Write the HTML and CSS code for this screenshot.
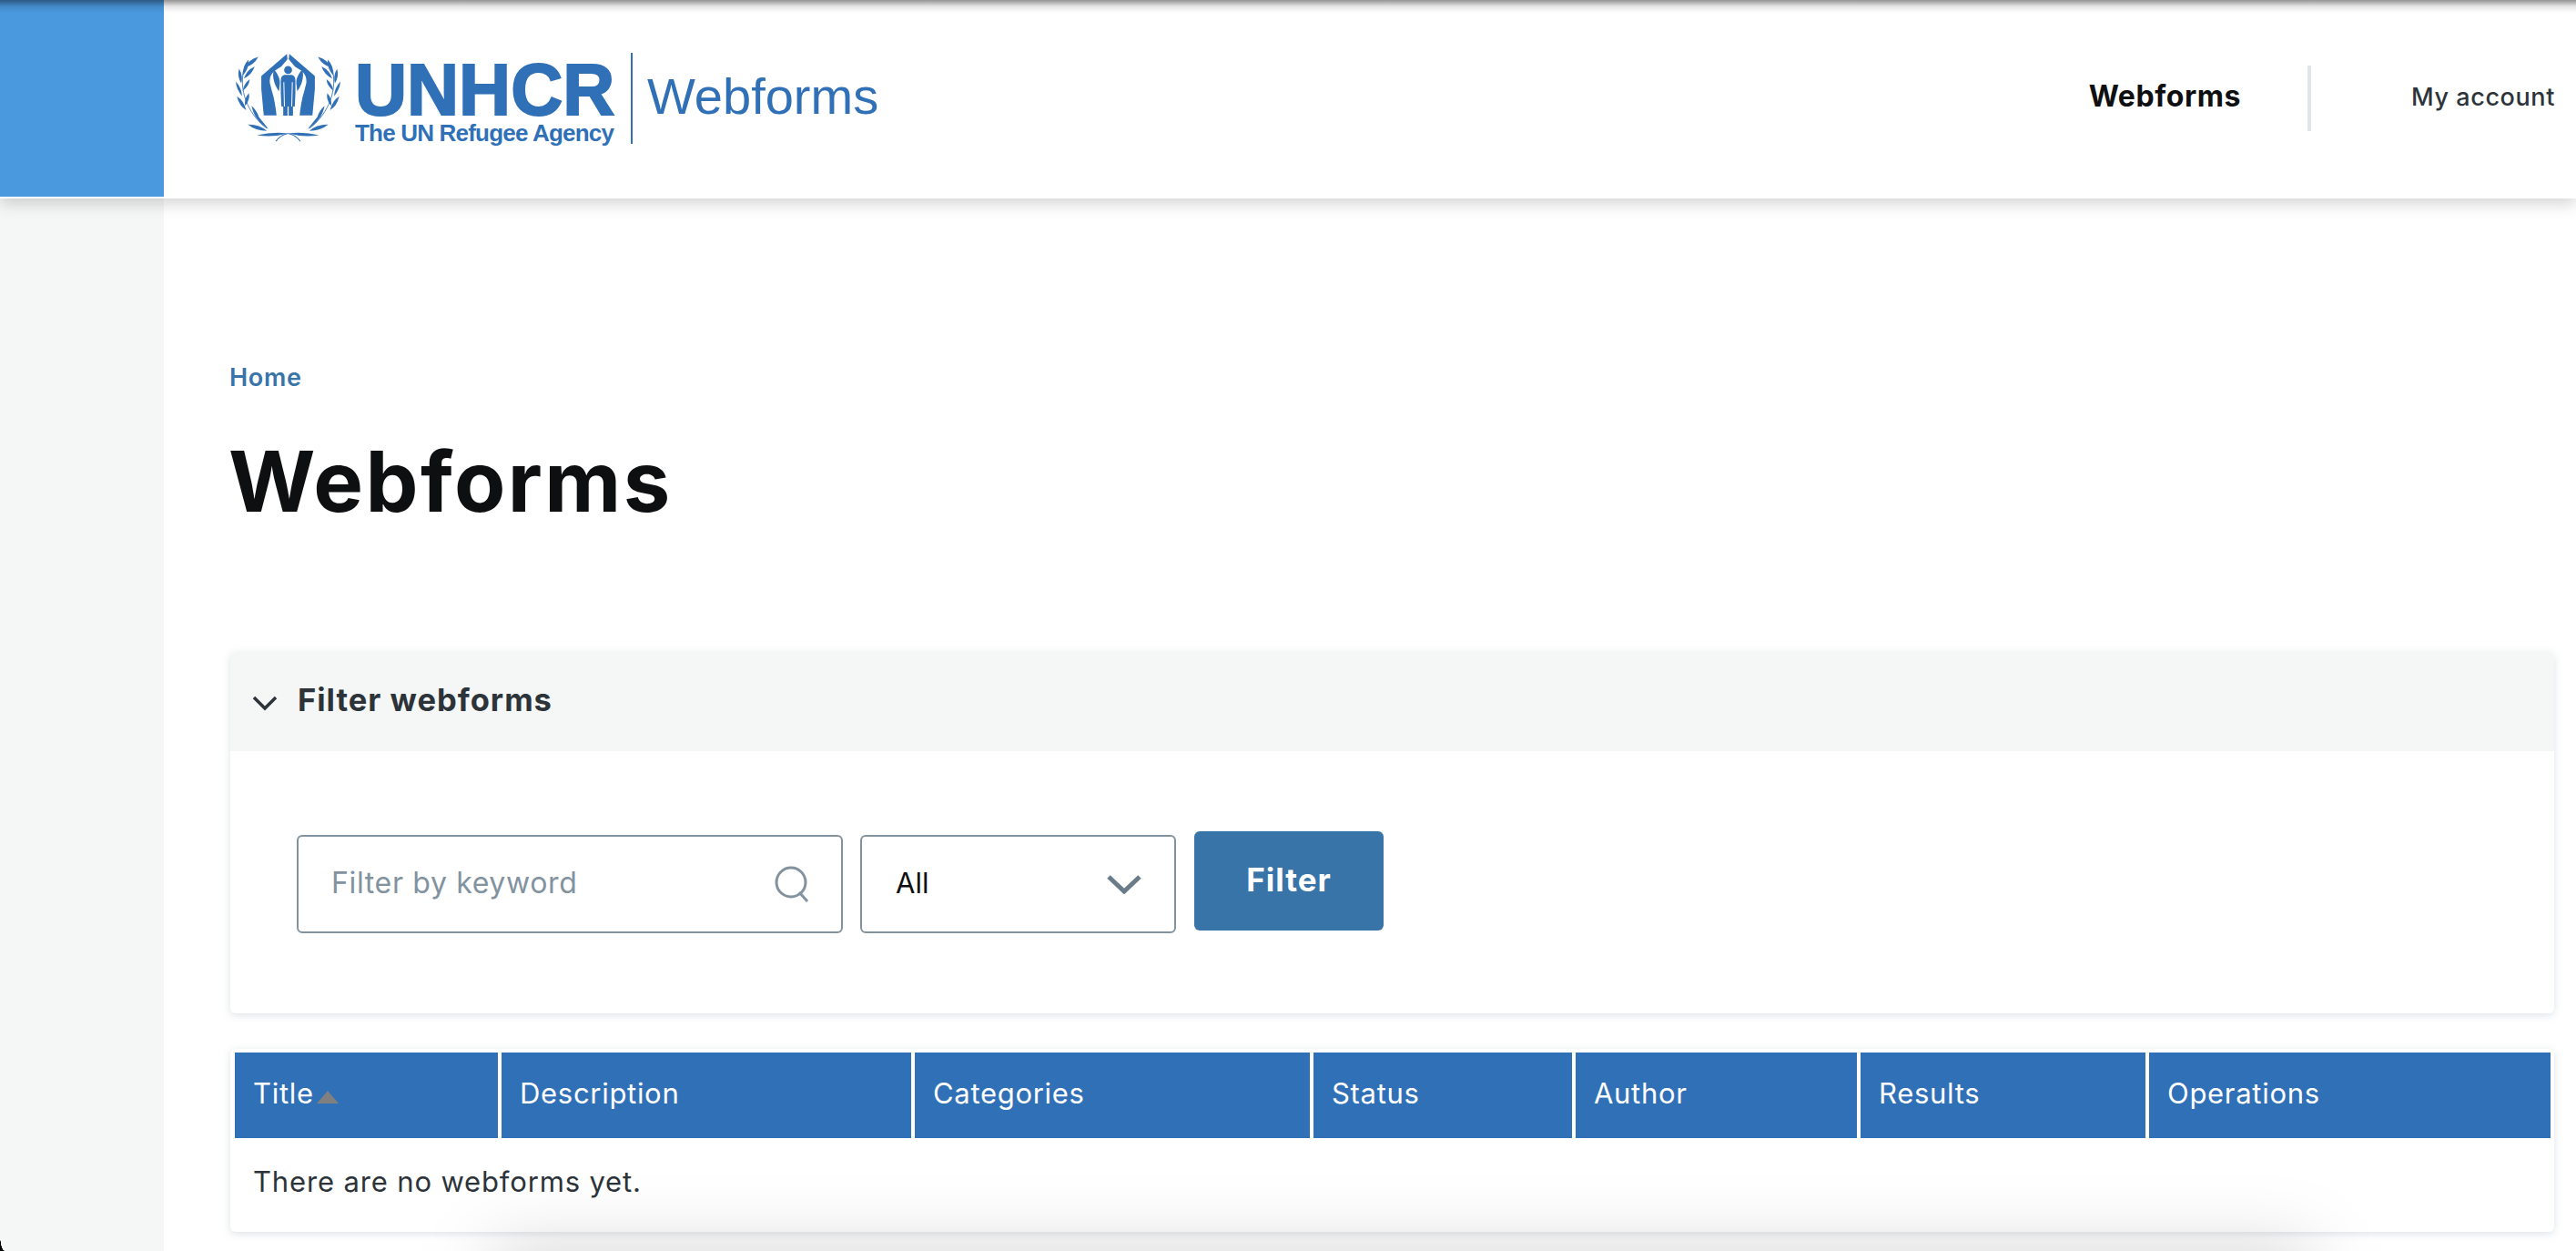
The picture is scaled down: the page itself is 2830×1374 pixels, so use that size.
FILE: index.html
```html
<!DOCTYPE html>
<html lang="en">
<head>
<meta charset="utf-8">
<title>Webforms</title>
<link rel="stylesheet" href="styles.css">
</head>
<body>
<div class="page">
  <header class="top">
    <div class="brand-block"></div>
    <div class="site-header">
      <a class="logo" href="#">
        <svg class="emblem" viewBox="55 52 350 292" aria-hidden="true">
          <defs>
            <g id="half">
              <path d="M226 55 L142 128 L142 170 L150 257 L192 257 C189 228 184 200 177 178 L170 150 C168 128 178 114 194 105 L208 96 L228 72 Z"/>
              <path d="M183 106 C192 116 204 132 203 152 L200 178 C194 170 187 158 184 146 C180 132 180 118 183 106 Z"/>
              <path d="M88 100 Q100 74 132 65 Q118 92 88 100Z"/>
              <path d="M81 126 Q80 94 100 74 Q102 104 81 126Z"/>
              <path d="M85 136 Q92 110 120 96 Q112 122 85 136Z"/>
              <path d="M76 152 Q62 128 69 104 Q83 128 76 152Z"/>
              <path d="M81 176 Q85 152 104 138 Q102 160 81 176Z"/>
              <path d="M79 194 Q60 172 58 146 Q77 166 79 194Z"/>
              <path d="M89 226 Q84 204 101 184 Q106 206 89 226Z"/>
              <path d="M92 240 Q68 224 62 194 Q86 210 92 240Z"/>
              <path d="M166 302 Q120 276 110 226 Q126 240 134 262 Q150 282 166 302Z"/>
              <path d="M160 308 Q122 307 98 287 Q136 286 160 308Z"/>
              <path d="M128 322 Q180 310 228 316 Q180 330 128 322Z"/>
              <path d="M190 342 Q204 322 230 316" fill="none" stroke="#3070b7" stroke-width="3"/>
              <path d="M160 300 C110 262 66 190 84 108" fill="none" stroke="#3070b7" stroke-width="2.5"/>
            </g>
          </defs>
          <use href="#half"/>
          <use href="#half" transform="matrix(-1 0 0 1 460 0)"/>
          <circle cx="230" cy="108" r="13"/>
          <path d="M218 124 H242 C250 126 254 132 254 142 L254 184 L252 228 H246 V258 H232 V228 H228 V258 H214 V228 H208 L206 184 V142 C206 132 210 126 218 124 Z"/>
          <path d="M216 148 L218 228 M244 148 L242 228" fill="none" stroke="#fff" stroke-width="3"/>
        </svg>
        <span class="wordmark">
          <span class="wordmark-main">UNHCR</span>
          <span class="wordmark-sub">The UN Refugee Agency</span>
        </span>
        <span class="logo-title">Webforms</span>
      </a>
      <nav class="nav">
        <a class="nav-main" href="#">Webforms</a>
        <a class="nav-account" href="#">My account</a>
      </nav>
    </div>
  </header>
  <div class="layout">
    <aside class="rail"></aside>
    <main class="content">
      <a class="crumb" href="#">Home</a>
      <h1 class="title">Webforms</h1>
      <section class="card filter">
        <div class="filter-head">
          <svg class="filter-chevron" viewBox="0 0 28 18" aria-hidden="true"><path d="M2 3 L14 15 L26 3"/></svg>
          <span class="filter-label">Filter webforms</span>
        </div>
        <form class="filter-form">
          <div class="field search">
            <span class="placeholder">Filter by keyword</span>
            <svg class="search-icon" viewBox="0 0 38 40" aria-hidden="true"><circle cx="18" cy="18" r="16"/><path d="M27 29 L36 39"/></svg>
          </div>
          <div class="field select">
            <span class="select-value">All</span>
            <svg class="select-chevron" viewBox="0 0 38 22" aria-hidden="true"><path d="M2 3 L19 19 L36 3"/></svg>
          </div>
          <button class="apply" type="button">Filter</button>
        </form>
      </section>
      <section class="card results">
        <table class="grid">
          <colgroup>
            <col class="c1"><col class="c2"><col class="c3"><col class="c4"><col class="c5"><col class="c6"><col class="c7">
          </colgroup>
          <thead>
            <tr>
              <th>Title<span class="sort"></span></th>
              <th>Description</th>
              <th>Categories</th>
              <th>Status</th>
              <th>Author</th>
              <th>Results</th>
              <th>Operations</th>
            </tr>
          </thead>
          <tbody>
            <tr><td colspan="7">There are no webforms yet.</td></tr>
          </tbody>
        </table>
      </section>
    </main>
  </div>
  <div class="edge-top"></div>
  <div class="edge-bottom"></div>
  <div class="corner"></div>
</div>
</body>
</html>
```
FILE: styles.css
```css
* { box-sizing: border-box; }
html, body { margin: 0; height: 100%; }
body { background: #fff; font-family: Inter, "Noto Sans", sans-serif; color: #2c343a; overflow: hidden; }
a { text-decoration: none; color: inherit; }

.page { position: relative; width: 2830px; height: 1374px; overflow: hidden; display: flex; flex-direction: column; }

.top { display: flex; height: 218px; background: #fff; position: relative; z-index: 2; box-shadow: 0 6px 16px rgba(0, 0, 0, .17); flex: none; }
.brand-block { width: 180px; height: 216px; background: #4a98de; flex: none; }
.site-header { flex: 1; display: flex; align-items: flex-start; justify-content: space-between; }

.logo { display: flex; align-items: flex-start; margin: 58px 0 0 78px; color: #3070b7; font-family: "Liberation Sans", Arial, sans-serif; }
.emblem { width: 117px; height: 98px; fill: #3070b7; flex: none; }
.wordmark { display: flex; flex-direction: column; margin-left: 15px; width: 284px; }
.wordmark-main { font-size: 79px; line-height: 56px; font-weight: 700; margin-top: 13px; -webkit-text-stroke: 2px #3070b7; }
.wordmark-sub { font-size: 26px; line-height: 28px; font-weight: 700; margin-top: 5px; white-space: nowrap; letter-spacing: -.8px; }
.logo-title { margin-left: 19px; padding-left: 16px; border-left: 2px solid #3070b7; height: 100px; font-size: 56px; line-height: 1; padding-top: 20px; }

.nav { display: flex; align-items: center; margin-top: 72px; height: 72px; }
.nav-main { font-size: 32px; font-weight: 700; color: #0d0f11; letter-spacing: .55px; padding-right: 73px; border-right: 4px solid #dfe5e8; line-height: 68px; height: 72px; }
.nav-account { font-size: 27px; font-weight: 500; letter-spacing: .6px; margin-left: 110px; margin-right: 23px; margin-top: -4px; }

.layout { flex: 1; display: flex; min-height: 0; }
.rail { width: 180px; background: #f5f7f7; flex: none; }
.content { flex: 1; padding: 183px 24px 0 73px; display: flex; flex-direction: column; align-items: stretch; }

.crumb { font-size: 27px; line-height: 27px; font-weight: 600; letter-spacing: .7px; margin-left: -1px; color: #3974a9; align-self: flex-start; }
.title { margin: 51px 0 0 -2px; font-size: 92px; line-height: 100px; font-weight: 700; color: #0d0f11; letter-spacing: 2.4px; }

.card { background: #fff; border-radius: 6px; box-shadow: 0 2px 8px rgba(120, 140, 160, .25); }
.filter { margin-top: 137px; height: 397px; overflow: hidden; }
.filter-head { height: 109px; background: #f5f7f7; display: flex; align-items: center; padding: 0 0 5px 24px; }
.filter-chevron { width: 28px; height: 18px; fill: none; stroke: #2c343a; stroke-width: 3.5; margin-top: 8px; }
.filter-label { margin-left: 22px; font-size: 34.5px; font-weight: 700; letter-spacing: 1px; color: #2c343a; }
.filter-form { display: flex; align-items: flex-start; padding: 92px 0 0 73px; }
.field { height: 108px; border: 2px solid #82939f; border-radius: 6px; display: flex; align-items: center; justify-content: space-between; background: #fff; }
.search { width: 600px; padding: 0 35px 0 37px; }
.placeholder { font-size: 32px; letter-spacing: .65px; color: #82939f; margin-left: -1px; padding-bottom: 3px; }
.search-icon { width: 38px; height: 40px; fill: none; stroke: #82939f; stroke-width: 3; }
.select { width: 347px; margin-left: 19px; padding: 0 36px 0 38px; }
.select-value { font-size: 31px; color: #0d0f11; margin-left: -1px; padding-bottom: 3px; }
.select-chevron { width: 38px; height: 22px; fill: none; stroke: #6a7c89; stroke-width: 5; }
.apply { width: 208px; height: 109px; margin: -4px 0 0 20px; padding-bottom: 4px; border: 0; border-radius: 6px; background: #3974a9; color: #fff; font: 700 35px Inter, sans-serif; letter-spacing: 1px; }

.results { margin-top: 39px; height: 201px; padding-left: 1px; }
.grid { width: 100%; table-layout: fixed; border-collapse: separate; border-spacing: 4px; }
.c1 { width: 289px; } .c2 { width: 450px; } .c3 { width: 434px; } .c4 { width: 284px; } .c5 { width: 309px; } .c6 { width: 313px; } .c7 { width: 441px; }
th { height: 94px; padding: 0 0 6px 20px; background: #3070b7; color: #fff; font-size: 31px; font-weight: 400; letter-spacing: .7px; text-align: left; }
td { padding: 24px 0 0 20px; font-size: 31px; line-height: 40px; letter-spacing: .85px; color: #2c343a; }
.sort { display: inline-block; width: 0; height: 0; margin-left: 3px; border-left: 12px solid transparent; border-right: 12px solid transparent; border-bottom: 14px solid #808080; }

.edge-top { position: absolute; left: 0; right: 0; top: 0; height: 14px; z-index: 3; background: linear-gradient(rgba(0, 0, 0, .42), rgba(0, 0, 0, .1) 50%, rgba(0, 0, 0, 0)); }
.edge-bottom { position: absolute; left: 540px; width: 2000px; top: 1366px; height: 90px; z-index: 3; background: rgba(0, 0, 0, .14); filter: blur(38px); }
.corner { position: absolute; left: 0; bottom: 0; width: 5px; height: 18px; z-index: 3; background: radial-gradient(ellipse 5px 18px at 100% 0, transparent 96%, #000 100%); }
```
